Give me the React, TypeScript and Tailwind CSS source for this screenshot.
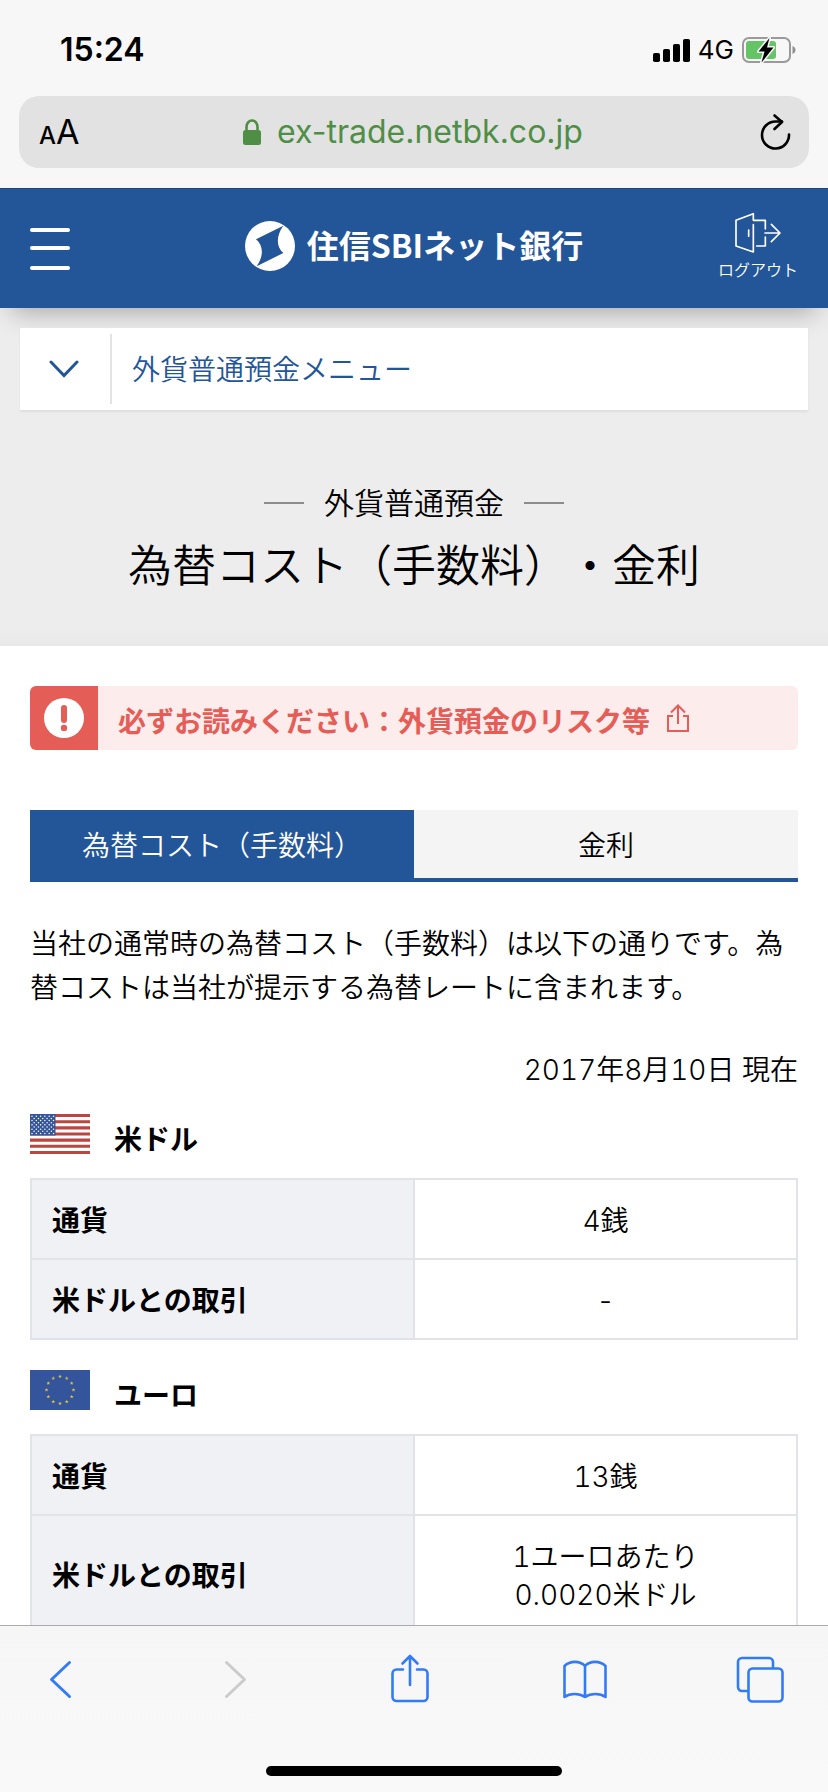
import React from "react";

type Row = { label: string; value: React.ReactNode };

function StatusBar() {
  return (
    <div className="flex h-24 items-center justify-between pt-1 pr-8 pl-[60px]">
      <time className="text-[32px] leading-9 font-semibold">15:24</time>
      <div className="flex items-center gap-2">
        <svg className="h-6 w-[37px]" viewBox="0 0 37 24" aria-label="電波">
          <rect x="0" y="15" width="7" height="9" rx="1.800" />
          <rect x="10" y="11" width="7" height="13" rx="1.800" />
          <rect x="20" y="6" width="7" height="18" rx="1.800" />
          <rect x="30" y="1" width="7" height="23" rx="1.800" />
        </svg>
        <span className="text-[26px] leading-8">4G</span>
        <svg className="h-7 w-[54px]" viewBox="0 0 54 28" aria-label="充電中">
          <rect x="1" y="2" width="47" height="24" rx="6" fill="none" stroke="#9a9a9a" strokeWidth="2" />
          <path d="M50.500 10v8c1.800-.7 3-2.200 3-4s-1.200-3.300-3-4z" fill="#8f8f8f" />
          <rect x="4" y="5" width="30" height="18" rx="3" fill="#65c466" />
          <path
            d="M27.500 2 16.500 15.500H22.500L19.500 26.500 31.500 11.500H25z"
            fill="#000"
            stroke="#f7f7f7"
            strokeWidth="3"
            strokeLinejoin="round"
            paintOrder="stroke"
          />
        </svg>
      </div>
    </div>
  );
}

function AddressBar() {
  return (
    <div className="mx-[19px] flex h-[72px] items-center justify-between rounded-[20px] bg-[#e2e2e3] pr-[18px] pl-5">
      <button type="button" aria-label="表示設定" className="flex w-11 items-baseline pt-1 leading-10">
        <span className="text-2xl leading-10 font-medium">A</span>
        <span className="text-[34px]">A</span>
      </button>
      <a href="#top" className="flex items-center gap-4 text-[#4f8f45]">
        <svg className="h-[26px] w-[18px]" viewBox="0 0 18 26" aria-hidden="true">
          <rect x="0" y="11" width="18" height="15" rx="2.500" fill="currentColor" />
          <path d="M3.500 12V8a5.500 6.500 0 0 1 11 0v4" fill="none" stroke="currentColor" strokeWidth="2.600" />
        </svg>
        <span className="text-[32px] leading-10">ex-trade.netbk.co.jp</span>
      </a>
      <button type="button" aria-label="再読み込み" className="flex w-12 justify-end">
        <svg className="h-9 w-8" viewBox="0 0 32 36" fill="none" stroke="#000" strokeWidth="2.600" strokeLinecap="round" strokeLinejoin="round">
          <path d="M30 20.500A13.500 13.500 0 1 1 16.500 7.500H23" />
          <path d="M15.500 1.500 23 8 15.500 15" />
        </svg>
      </button>
    </div>
  );
}

function SiteHeader() {
  return (
    <header className="relative z-10 grid h-[120px] grid-cols-[1fr_auto_1fr] items-center border-t border-[#1b4478] bg-[#235699] px-[30px] text-white shadow-[0_16px_24px_-12px_rgba(0,0,0,0.3)]">
      <button type="button" aria-label="メニュー" className="w-10">
        <svg className="h-[42px] w-10" viewBox="0 0 40 42" fill="#fff">
          <rect x="0" y="0" width="40" height="4" rx="2" />
          <rect x="0" y="18" width="40" height="4" rx="2" />
          <rect x="0" y="38" width="40" height="4" rx="2" />
        </svg>
      </button>
      <a href="#home" className="flex items-center gap-3 pb-1.5">
        <svg className="size-[50px]" viewBox="0 0 150 150" aria-hidden="true">
          <circle cx="75" cy="75" r="75" fill="#fff" />
          <path d="M115 14 33 55C54 72 58 102 35 136L115 96C93 76 93 45 115 14Z" fill="#235699" />
        </svg>
        <span className="pb-1 font-['Noto_Sans_CJK_JP',sans-serif] text-[32px] leading-[48px] font-bold">住信SBIネット銀行</span>
      </a>
      <button type="button" className="flex flex-col items-center gap-1 justify-self-end pb-1">
        <svg className="h-[42px] w-12" viewBox="960 96 144 126" fill="none" stroke="#fff" strokeWidth="5" strokeLinecap="round" strokeLinejoin="round" aria-hidden="true">
          <path d="M1018 134V216L966 198V121L1018 101V121H1054V147" />
          <path d="M1028 198H1054V171M1004 150V169" />
          <path d="M1053 159H1097M1072 133 1098 159 1072 185" />
        </svg>
        <span className="text-base leading-6 font-[350]">ログアウト</span>
      </button>
    </header>
  );
}

function Hero() {
  return (
    <section className="bg-gradient-to-b from-[#ededed] from-95% to-[#e8e8e8] px-5 pt-5 pb-12">
      <button
        type="button"
        className="relative z-20 flex h-[82px] w-full items-center bg-white text-[#235699] shadow-[0_2px_2px_rgba(0,0,0,0.06)]"
      >
        <span className="flex h-[70px] w-[92px] items-center justify-center border-r-2 border-[#e3e3e3]">
          <svg className="h-5 w-8" viewBox="0 0 32 20" fill="none" stroke="currentColor" strokeWidth="3" strokeLinecap="round" aria-hidden="true">
            <path d="M2 3 15 16.500 28 3" />
          </svg>
        </span>
        <span className="pt-0.5 pl-5 text-[28px] leading-10 font-[350]">外貨普通預金メニュー</span>
      </button>
      <h1 className="mt-[68px] flex flex-col items-center font-[350]">
        <span className="flex items-center gap-5 text-[30px] leading-[50px] before:h-0.5 before:w-10 before:bg-[#8c8c8c] after:h-0.5 after:w-10 after:bg-[#8c8c8c]">
          外貨普通預金
        </span>
        <span className="mt-1.5 text-[44px] leading-[64px]">為替コスト（手数料）・金利</span>
      </h1>
    </section>
  );
}

function RiskNotice() {
  return (
    <a href="#risk" className="flex h-16 items-center overflow-hidden rounded-md bg-[#fcecec] text-[#e55d57]">
      <span className="flex h-16 w-[68px] items-center justify-center bg-[#e55d57]">
        <svg className="size-10" viewBox="0 0 40 40" aria-hidden="true">
          <circle cx="20" cy="20" r="20" fill="#fff" />
          <rect x="17" y="7" width="6" height="18" rx="3" fill="currentColor" />
          <circle cx="20" cy="30" r="3.200" fill="currentColor" />
        </svg>
      </span>
      <span className="pt-2 pl-5 text-[28px] leading-10 font-bold">必ずお読みください：外貨預金のリスク等</span>
      <svg className="ml-4 h-7 w-6" viewBox="0 0 24 28" fill="none" stroke="currentColor" strokeWidth="2" aria-hidden="true">
        <path d="M7 12H2V27H22V12H17M12 20V2M5 8.500 12 1.500 19 8.500" />
      </svg>
    </a>
  );
}

function Tabs() {
  return (
    <div role="tablist" className="grid h-[72px] grid-cols-2 border-b-4 border-[#235699] text-[28px] leading-10 font-[350]">
      <button type="button" role="tab" aria-selected="true" className="bg-[#235699] pt-1 text-white">
        為替コスト（手数料）
      </button>
      <button type="button" role="tab" aria-selected="false" className="bg-[#f4f4f4] pt-1">
        金利
      </button>
    </div>
  );
}

const starRows = [0, 1, 2, 3, 4, 5, 6, 7, 8];

function UsFlag() {
  return (
    <svg className="h-10 w-[60px]" viewBox="0 0 60 39" preserveAspectRatio="none" aria-hidden="true">
      <rect width="60" height="39" fill="#fff" />
      <path d="M0 1.500H60M0 7.500H60M0 13.500H60M0 19.500H60M0 25.500H60M0 31.500H60M0 37.500H60" stroke="#bd4540" strokeWidth="3" />
      <rect width="25.500" height="21" fill="#34559c" />
      {starRows.map((r) =>
        (r % 2 ? [0, 1, 2, 3, 4] : [0, 1, 2, 3, 4, 5]).map((c) => (
          <circle key={`${r}-${c}`} cx={2 + c * 4.3 + (r % 2 ? 2.15 : 0)} cy={2.2 + r * 2.1} r="0.750" fill="#fff" />
        ))
      )}
    </svg>
  );
}

const euAngles = [0, 30, 60, 90, 120, 150, 180, 210, 240, 270, 300, 330];

function EuFlag() {
  return (
    <svg className="h-10 w-[60px]" viewBox="0 0 60 40" aria-hidden="true">
      <rect width="60" height="40" fill="#34559c" />
      {euAngles.map((a) => {
        const x = 30 + 13.5 * Math.sin((a * Math.PI) / 180);
        const y = 20 - 13.5 * Math.cos((a * Math.PI) / 180);
        return (
          <path
            key={a}
            transform={`translate(${x} ${y})`}
            d="M0-2 .47-.65 1.900-.62.760.25 1.180 1.620 0 .8-1.180 1.620-.760.25-1.900-.62-.47-.65Z"
            fill="#e0c341"
          />
        );
      })}
    </svg>
  );
}

function Currency({ flag, name, rows }: { flag: React.ReactNode; name: string; rows: Row[] }) {
  return (
    <section>
      <h2 className="flex h-16 gap-6 text-[28px] leading-[52px] font-bold">
        {flag}
        {name}
      </h2>
      <table className="w-full table-fixed border-collapse text-[28px] leading-[38px]">
        <tbody>
          {rows.map((row) => (
            <tr key={row.label}>
              <th scope="row" className="border-2 border-[#e2e3e8] bg-[#f0f1f4] px-5 pt-[22px] pb-[18px] text-left font-bold">
                {row.label}
              </th>
              <td className="border-2 border-[#e2e3e8] px-5 pt-[22px] pb-[18px] text-center font-[350] tabular-nums">{row.value}</td>
            </tr>
          ))}
        </tbody>
      </table>
    </section>
  );
}

function Toolbar() {
  return (
    <nav className="border-t border-[#a9abae] bg-gradient-to-b from-[#f6f6f6] to-[#f9f9f9] pb-4 text-[#337bf6]">
      <div className="flex h-[140px] items-start justify-between pt-7 pr-11 pl-9">
        <button type="button" aria-label="戻る">
          <svg className="h-[50px] w-12" viewBox="0 0 48 50" fill="none" stroke="currentColor" strokeWidth="3" strokeLinecap="round" strokeLinejoin="round">
            <path d="M33.500 8.500 15.500 25.500 33.500 42.500" />
          </svg>
        </button>
        <button type="button" aria-label="進む" disabled className="text-[#cbcbcb]">
          <svg className="h-[50px] w-12" viewBox="0 0 48 50" fill="none" stroke="currentColor" strokeWidth="3" strokeLinecap="round" strokeLinejoin="round">
            <path d="M15.500 8.500 33.500 25.500 15.500 42.500" />
          </svg>
        </button>
        <button type="button" aria-label="共有">
          <svg className="h-[50px] w-12" viewBox="-4 0 48 50" fill="none" stroke="currentColor" strokeWidth="2.600" strokeLinecap="round" strokeLinejoin="round">
            <path d="M13 15.500H6.500a4 4 0 0 0-4 4V43a4 4 0 0 0 4 4h27a4 4 0 0 0 4-4V19.500a4 4 0 0 0-4-4H27M20 31V2M12.500 9.500 20 2 27.500 9.500" />
          </svg>
        </button>
        <button type="button" aria-label="ブックマーク">
          <svg className="h-[50px] w-12" viewBox="0 0 48 50" fill="none" stroke="currentColor" strokeWidth="2.600" strokeLinecap="round" strokeLinejoin="round">
            <path d="M24 12C19 6.500 9 6.500 3.500 12V43C9 39 18 39 24 43 30 39 39 39 44.500 43V12C39 6.500 29 6.500 24 12V43" />
          </svg>
        </button>
        <button type="button" aria-label="タブ一覧">
          <svg className="h-[50px] w-12" viewBox="0 0 48 50" fill="none" stroke="currentColor" strokeWidth="2.600" strokeLinejoin="round">
            <path d="M12 37H6a4 4 0 0 1-4-4V8a4 4 0 0 1 4-4H33a4 4 0 0 1 4 4V14" />
            <rect x="12.500" y="14.500" width="34" height="33" rx="4" />
          </svg>
        </button>
      </div>
      <div className="mx-auto h-2.5 w-[296px] rounded-full bg-black" />
    </nav>
  );
}

const usdRows: Row[] = [
  { label: "通貨", value: "4銭" },
  { label: "米ドルとの取引", value: "-" },
];

const eurRows: Row[] = [
  { label: "通貨", value: "13銭" },
  {
    label: "米ドルとの取引",
    value: (
      <>
        1ユーロあたり
        <br />
        0.0020米ドル
      </>
    ),
  },
];

export default function App() {
  return (
    <div
      lang="ja"
      className="flex h-screen flex-col bg-white font-['Inter','Noto_Sans_CJK_JP',sans-serif] text-black [text-spacing-trim:space-all]"
    >
      <div className="shrink-0 bg-[#f7f7f7] pb-5">
        <StatusBar />
        <AddressBar />
      </div>
      <div className="min-h-0 flex-1 overflow-y-auto [scrollbar-width:none]">
        <SiteHeader />
        <Hero />
        <main className="px-[30px] pt-10">
          <RiskNotice />
          <div className="mt-[60px]">
            <Tabs />
          </div>
          <p className="mt-10 text-[28px] leading-[44px] font-[350]">
            当社の通常時の為替コスト（手数料）は以下の通りです。為替コストは当社が提示する為替レートに含まれます。
          </p>
          <p className="mt-[38px] text-right text-[28px] leading-[44px] font-[350] tabular-nums">2017年8月10日 現在</p>
          <div className="mt-[22px] flex flex-col gap-[30px]">
            <Currency flag={<UsFlag />} name="米ドル" rows={usdRows} />
            <Currency flag={<EuFlag />} name="ユーロ" rows={eurRows} />
          </div>
        </main>
      </div>
      <Toolbar />
    </div>
  );
}
